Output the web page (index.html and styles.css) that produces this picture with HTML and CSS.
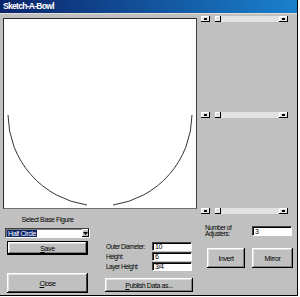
FILE: index.html
```html
<!DOCTYPE html>
<html>
<head>
<meta charset="utf-8">
<link rel="stylesheet" href="styles.css">
</head>
<body>
<div class="window">
  <div class="titlebar">Sketch-A-Bowl</div>
  <div class="client">
    <div class="top">
      <div class="canvas">
        <svg width="192" height="189" viewBox="0 0 192 189">
          <path d="M4,96 A92,92 0 0,0 83,186" fill="none" stroke="#333" stroke-width="1"/>
          <path d="M109,186 A92,92 0 0,0 188,96" fill="none" stroke="#333" stroke-width="1"/>
        </svg>
      </div>
      <div class="sliders">
        <div class="slider"><span class="sbtn"><i></i></span><span class="thumb"></span><span class="track"></span><span class="sbtn"><i></i></span></div>
        <div class="slider"><span class="sbtn"><i></i></span><span class="thumb"></span><span class="track"></span><span class="sbtn"><i></i></span></div>
        <div class="slider"><span class="sbtn"><i></i></span><span class="thumb"></span><span class="track"></span><span class="sbtn"><i></i></span></div>
      </div>
    </div>
    <div class="bottom">
      <div class="col1">
        <div class="caption">Select Base Figure</div>
        <div class="select"><span class="sel-text">Half Circle</span><span class="sel-arrow"><svg width="5" height="3" viewBox="0 0 5 3"><path d="M0,0 H5 L2.5,3 Z" fill="#000"/></svg></span></div>
        <div class="btn btn-default save"><u>S</u>ave</div>
        <div class="btn close"><u>C</u>lose</div>
      </div>
      <div class="col2">
        <div class="field"><span class="flabel">Outer Diameter:</span><span class="input">10</span></div>
        <div class="field"><span class="flabel">Height:</span><span class="input">6</span></div>
        <div class="field"><span class="flabel">Layer Height:</span><span class="input">3/4</span></div>
        <div class="btn publish"><u>P</u>ublish Data as...</div>
      </div>
      <div class="col3">
        <div class="adj"><span class="adj-label">Number of<br>Adjusters:</span><span class="input adj-input">3</span></div>
        <div class="btnrow"><div class="btn invert">Invert</div><div class="btn mirror">Mirror</div></div>
      </div>
    </div>
  </div>
</div>
</body>
</html>
```

FILE: styles.css
```css
html, body {
  margin: 0;
  padding: 0;
  background: #ffffff;
}
body {
  width: 300px;
  height: 297px;
  overflow: hidden;
  font-family: "Liberation Sans", Arial, sans-serif;
  color: #000;
  letter-spacing: -0.4px;
}
.window {
  width: 298px;
  height: 296px;
  box-sizing: border-box;
  background: #c0c0c0;
  border-right: 1px solid #000;
  border-bottom: 1px solid #000;
  display: flex;
  flex-direction: column;
}
.titlebar {
  height: 13px;
  line-height: 13px;
  padding-left: 3px;
  font-size: 8.5px;
  letter-spacing: -0.7px;
  font-weight: bold;
  color: #fff;
  background: linear-gradient(to right, #0a246a, #1a80cc);
  border-bottom: 1px solid #e2ddd6;
}
.client {
  display: flex;
  flex-direction: column;
}
.top {
  display: flex;
  align-items: flex-start;
}
.canvas {
  margin-top: 4px;
  margin-left: 3px;
  width: 194px;
  height: 191px;
  box-sizing: border-box;
  background: #fff;
  border: 1px solid #2a2a2a;
  border-right-color: #404040;
  border-bottom-color: #707070;
}
.canvas svg {
  display: block;
}
.sliders {
  margin-top: 2px;
  margin-left: 4px;
  width: 87px;
  height: 198px;
  display: flex;
  flex-direction: column;
  justify-content: space-between;
}
.slider {
  display: flex;
  height: 6px;
}
.sbtn {
  width: 9px;
  height: 6px;
  box-sizing: border-box;
  background: #e4e4e4;
  box-shadow: inset -1px -1px #000, inset 1px 1px #fff;
  display: flex;
  align-items: center;
  padding-left: 3px;
}
.sbtn i {
  display: block;
  width: 3px;
  height: 2px;
  background: #000;
}
.thumb {
  margin-left: 5px;
  width: 6px;
  height: 6px;
  box-sizing: border-box;
  background: #e4e4e4;
  box-shadow: inset -1px -1px #000, inset 1px 1px #fff;
}
.track {
  flex: 1;
  background: #e2e2e2;
}
.bottom {
  display: flex;
  align-items: flex-start;
}
.col1 {
  margin-left: 5px;
  width: 85px;
  display: flex;
  flex-direction: column;
}
.caption {
  margin-top: 2px;
  font-size: 7px;
  line-height: 8px;
  letter-spacing: -0.4px;
  text-align: center;
  white-space: nowrap;
}
.select {
  margin-top: 4px;
  height: 10px;
  box-sizing: border-box;
  background: #fff;
  border: 1px solid;
  border-color: #404040 #fff #fff #404040;
  box-shadow: 1px 1px 0 #808080 inset;
  display: flex;
  align-items: center;
  padding-left: 1px;
}
.sel-text {
  background: #0a246a;
  color: #fff;
  font-size: 7px;
  line-height: 7px;
  padding: 0 1px;
  white-space: nowrap;
}
.sel-arrow {
  margin-left: auto;
  width: 7px;
  height: 8px;
  box-sizing: border-box;
  background: #c0c0c0;
  box-shadow: inset -1px -1px #000, inset 1px 1px #fff;
  display: flex;
  align-items: center;
  justify-content: center;
}
.sel-arrow svg {
  display: block;
}
.btn {
  box-sizing: border-box;
  background: #c0c0c0;
  box-shadow: inset -1px -1px #000, inset 1px 1px #fff, inset -2px -2px #808080, inset 2px 2px #dfdfdf;
  font-size: 7px;
  display: flex;
  align-items: center;
  justify-content: center;
  white-space: nowrap;
}
.btn-default {
  border: 1px solid #000;
}
.save {
  margin: 3px 2px 0 2px;
  height: 14px;
}
.close {
  margin: 18px 2px 0 2px;
  height: 20px;
  box-shadow: inset -1px -1px #000, inset 1px 1px #fff, inset -2px -2px #404040, inset 2px 2px #dfdfdf;
}
.col2 {
  margin-left: 15px;
  width: 88px;
  display: flex;
  flex-direction: column;
  padding-top: 28px;
}
.field {
  display: flex;
  align-items: center;
  height: 9px;
  margin-bottom: 1px;
}
.flabel {
  width: 47px;
  padding-left: 1px;
  box-sizing: border-box;
  font-size: 6.5px;
  letter-spacing: -0.5px;
  white-space: nowrap;
}
.input {
  width: 40px;
  height: 9px;
  box-sizing: border-box;
  background: #fff;
  border: 1px solid;
  border-color: #404040 #fff #fff #404040;
  box-shadow: 1px 1px 0 #000 inset;
  font-size: 7px;
  line-height: 7px;
  padding-left: 2px;
  display: flex;
  align-items: center;
}
.publish {
  margin-top: 6px;
  height: 14px;
}
.col3 {
  margin-left: 12px;
  width: 88px;
  display: flex;
  flex-direction: column;
  padding-top: 11px;
}
.adj {
  display: flex;
  align-items: flex-start;
}
.adj-label {
  width: 47px;
  font-size: 6.5px;
  letter-spacing: -0.45px;
  line-height: 6px;
}
.adj-input {
  margin-top: 1px;
  height: 10px;
}
.btnrow {
  display: flex;
  margin-top: 11px;
}
.invert {
  margin-left: 2px;
  width: 38px;
  height: 20px;
}
.mirror {
  margin-left: 7px;
  width: 41px;
  height: 20px;
}
```
